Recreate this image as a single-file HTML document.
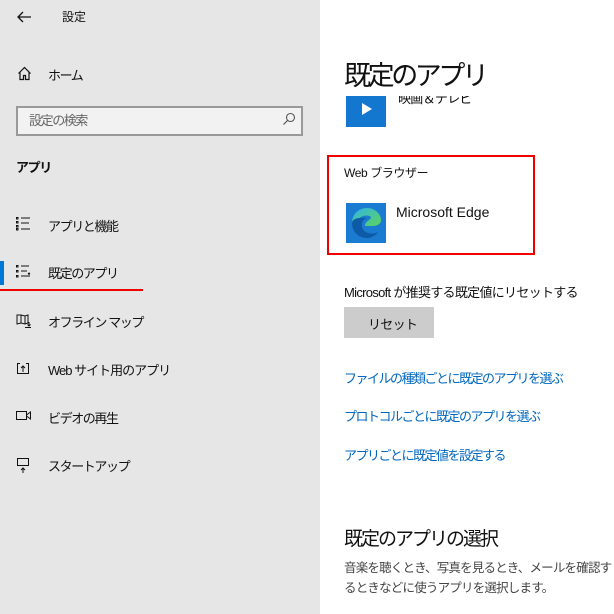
<!DOCTYPE html>
<html><head><meta charset="utf-8"><style>
body{margin:0;width:614px;height:614px;overflow:hidden;position:relative;background:#fff;font-family:"Liberation Sans","Noto Sans CJK JP",sans-serif;color:#000}
.a{position:absolute;white-space:nowrap}
#side{position:absolute;left:0;top:0;width:320px;height:614px;background:#e6e6e6}
.n{font-size:13px;color:#111;letter-spacing:-1.4px}
.r{font-size:13px;color:#111;letter-spacing:-0.7px}
.l{font-size:13px;color:#0067c0;letter-spacing:-1.5px}
</style></head><body>
<div class="a" style="left:0;top:0;width:614px;height:1px;background:#2b2b2b"></div>
<div id="side">
<svg class="a" style="left:16px;top:10px" width="16" height="14"><path d="M15 7H2M7 2L2 7l5 5" stroke="#111" stroke-width="1.3" fill="none"/></svg>
<div class="a n" style="left:62px;top:8px;font-size:12px;letter-spacing:0">設定</div>
<svg class="a" style="left:17px;top:66px" width="15" height="15"><path d="M1.5 7.5L7.5 1.5l6 6M3 6.5V13.5h3.5v-4h2v4H12V6.5" stroke="#111" stroke-width="1.2" fill="none"/></svg>
<div class="a n" style="left:48px;top:65px">ホーム</div>
<div class="a" style="left:16px;top:106px;width:283px;height:26px;border:2px solid #999;background:#f2f2f2"></div>
<div class="a n" style="left:29px;top:110px;color:#666">設定の検索</div>
<svg class="a" style="left:282px;top:112px" width="14" height="14"><circle cx="8.5" cy="5.5" r="4" stroke="#555" fill="none" stroke-width="1.1"/><path d="M5.5 8.5L1.5 12.5" stroke="#555" stroke-width="1.2"/></svg>
<div class="a n" style="left:16px;top:157px;font-weight:bold">アプリ</div>
<svg class="a" style="left:16px;top:217px" width="16" height="14"><g fill="none" stroke="#111"><rect x="0.5" y="0.5" width="1.5" height="1.5"/><rect x="0.5" y="4.5" width="1.5" height="1.5"/><rect x="0.5" y="8.5" width="1.5" height="1.5"/><rect x="0.5" y="11.5" width="1.5" height="1.5"/></g><path d="M5 1h9M5 6h8M5 12h9" stroke="#111"/></svg>
<div class="a n" style="left:48px;top:216px">アプリと機能</div>
<div class="a" style="left:0;top:261px;width:4px;height:24px;background:#0078d7"></div>
<svg class="a" style="left:16px;top:265px" width="16" height="14"><g fill="none" stroke="#111"><rect x="0.5" y="0.5" width="1.5" height="1.5"/><rect x="0.5" y="5.5" width="1.5" height="1.5"/><rect x="0.5" y="10.5" width="1.5" height="1.5"/></g><path d="M5 1h8M5 6h6M5 11h7M13 8v4M12 9l1-1 1 1" stroke="#111"/></svg>
<div class="a n" style="left:48px;top:263px">既定のアプリ</div>
<div class="a" style="left:0;top:289px;width:143px;height:2px;background:#e00"></div>
<svg class="a" style="left:16px;top:313px" width="16" height="16"><path d="M1 2v9l4-1 4 1 3-1V2l-3 1-4-1z M5 2v8M9 3v8M13 9v4M11.5 11.5l1.5 1.5 1.5-1.5M9 14.5h6" stroke="#111" fill="none"/></svg>
<div class="a n" style="left:48px;top:312px">オフライン マップ</div>
<svg class="a" style="left:16px;top:362px" width="16" height="14"><path d="M4 1.5H1.5v10h11v-10H10M7 10V4M5 6l2-2 2 2" stroke="#111" fill="none"/></svg>
<div class="a n" style="left:48px;top:360px;letter-spacing:-1px">Web サイト用のアプリ</div>
<svg class="a" style="left:16px;top:410px" width="16" height="12"><path d="M0.5 1.5h10v8h-10zM10.5 5l4-3v7l-4-3" stroke="#111" fill="none"/></svg>
<div class="a n" style="left:48px;top:408px">ビデオの再生</div>
<svg class="a" style="left:16px;top:457px" width="16" height="17"><path d="M1.5 1.5h11v7h-11zM7 16V11M5 13l2-2 2 2" stroke="#111" fill="none"/></svg>
<div class="a n" style="left:48px;top:456px">スタートアップ</div>
</div>
<div class="a r" style="left:398px;top:88px">映画＆テレビ</div>
<div class="a" style="left:346px;top:95px;width:40px;height:32px;background:#1377d0"></div>
<svg class="a" style="left:361px;top:102px" width="12" height="14"><path d="M1 1l10 6-10 6z" fill="#fff"/></svg>
<div class="a" style="left:320px;top:0;width:294px;height:96px;background:#fff"></div>
<div class="a" style="left:344px;top:54px;font-size:27px;letter-spacing:-3.4px;color:#111">既定のアプリ</div>
<div class="a" style="left:327px;top:155px;width:204px;height:96px;border:2px solid #e00"></div>
<div class="a r" style="left:344px;top:164px;font-size:12px;letter-spacing:-0.4px">Web ブラウザー</div>
<div class="a" style="left:346px;top:203px;width:40px;height:40px;background:#1a7bd0"></div>
<svg class="a" style="left:346px;top:203px" width="40" height="40"><defs><linearGradient id="g" x1="0" y1="0" x2="1" y2="1"><stop offset="0" stop-color="#2fb5e8"/><stop offset="1" stop-color="#5fd35a"/></linearGradient></defs><path d="M6 20C6 11 13 5 21 5c8 0 14 6 14 12 0 4-4 6-8 6h-8c0-5 6-6 6-9-3-3-12-2-15 6z" fill="url(#g)"/><path d="M6 20c0 9 7 15 15 15 5 0 9-3 11-6-5 3-14 2-16-5-1-4 1-8 5-9C12 14 6 16 6 20z" fill="#0d5aa7"/></svg>
<div class="a" style="left:396px;top:204px;font-size:14px;color:#111">Microsoft Edge</div>
<div class="a r" style="left:344px;top:282px">Microsoft が推奨する既定値にリセットする</div>
<div class="a" style="left:344px;top:307px;width:90px;height:31px;background:#ccc"></div>
<div class="a r" style="left:368px;top:314px">リセット</div>
<div class="a l" style="left:344px;top:368px">ファイルの種類ごとに既定のアプリを選ぶ</div>
<div class="a l" style="left:344px;top:406px">プロトコルごとに既定のアプリを選ぶ</div>
<div class="a l" style="left:344px;top:445px">アプリごとに既定値を設定する</div>
<div class="a" style="left:344px;top:524px;font-size:19px;letter-spacing:-2px;color:#111">既定のアプリの選択</div>
<div class="a r" style="left:344px;top:557px;font-size:12.5px;color:#444;letter-spacing:-0.8px">音楽を聴くとき、写真を見るとき、メールを確認す</div>
<div class="a r" style="left:344px;top:577px;font-size:12.5px;color:#444;letter-spacing:-0.8px">るときなどに使うアプリを選択します。</div>
</body></html>
